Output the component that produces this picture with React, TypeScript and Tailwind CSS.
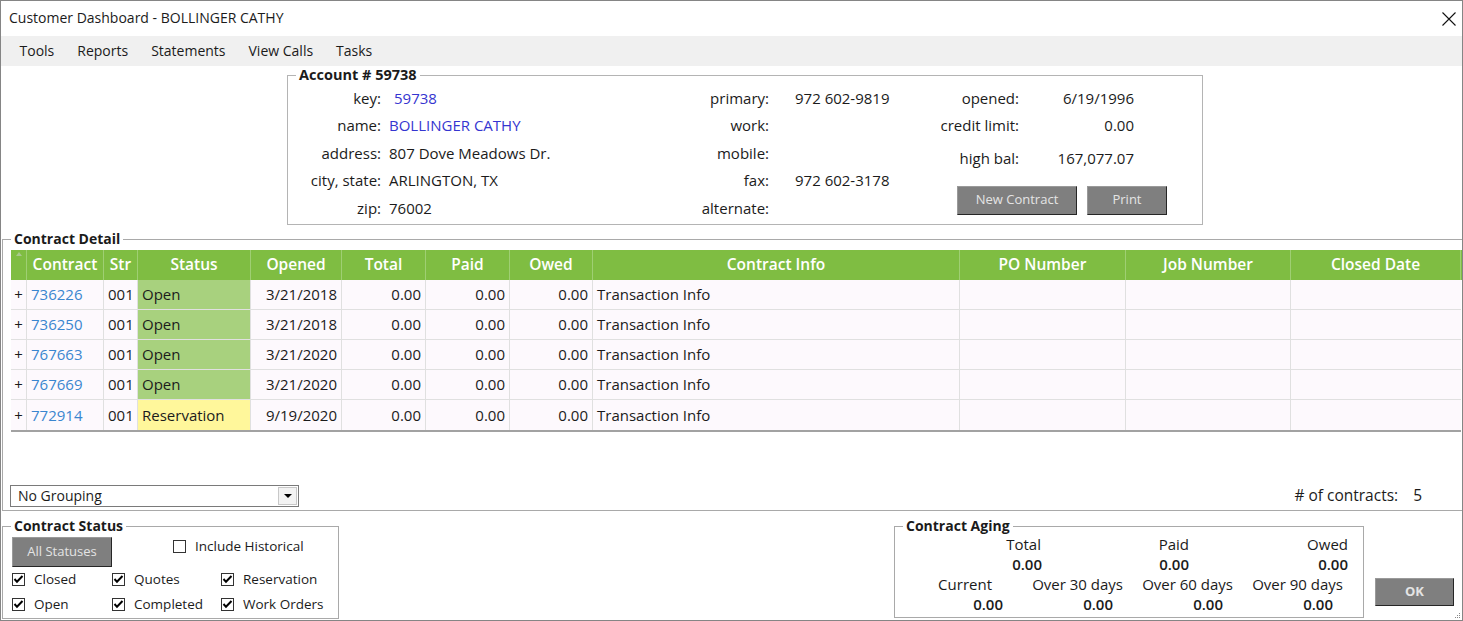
const font = { fontFamily: '"Open Sans", "Noto Sans", sans-serif' };

const cols =
  "grid grid-cols-[16px_77px_34px_113px_91px_84px_84px_83px_367px_166px_165px_170px]";

const contracts = [
  { no: "736226", status: "Open", opened: "3/21/2018" },
  { no: "736250", status: "Open", opened: "3/21/2018" },
  { no: "767663", status: "Open", opened: "3/21/2020" },
  { no: "767669", status: "Open", opened: "3/21/2020" },
  { no: "772914", status: "Reservation", opened: "9/19/2020" },
];

function WinButton({ label, className }: { label: string; className: string }) {
  return (
    <button
      className={`bg-[#7f7f7f] border border-[#9a9a9a] border-r-[#262626] border-b-[#262626] text-[#e4e4e4] text-[13px] flex items-center justify-center ${className}`}
    >
      {label}
    </button>
  );
}

function Check({ checked, label }: { checked: boolean; label: string }) {
  return (
    <div className="flex items-center gap-[9px] h-full">
      <span className="w-[13px] h-[13px] border border-[#333333] bg-white flex items-center justify-center">
        {checked && (
          <svg viewBox="0 0 11 11" className="w-[11px] h-[11px]">
            <path d="M1.5 5 L4 7.8 L9.5 2" stroke="#000" strokeWidth="2" fill="none" />
          </svg>
        )}
      </span>
      <span>{label}</span>
    </div>
  );
}

function Row({ label, value, w, gap, blue, valueClass }: { label: string; value?: string; w: string; gap: string; blue?: boolean; valueClass?: string }) {
  return (
    <div className={`flex items-center h-[27.5px] ${gap}`}>
      <span className={`${w} text-right shrink-0 whitespace-nowrap`}>{label}</span>
      <span className={`${blue ? "text-[#3535d0]" : ""} ${valueClass ?? ""} whitespace-nowrap`}>{value}</span>
    </div>
  );
}

export default function App() {
  return (
    <div
      style={font}
      className="w-[1463px] h-[621px] border border-[#858585] bg-white text-[14px] text-[#1b1b1b] overflow-hidden flex flex-col relative"
    >
      {/* title bar */}
      <div className="h-[35px] flex items-center justify-between pl-[8px] pr-[6px] shrink-0">
        <span className="-mt-[2px]">Customer Dashboard - BOLLINGER CATHY</span>
        <svg viewBox="0 0 14 14" className="w-[14px] h-[14px]">
          <path d="M0.5 0.5 L13.5 13.5 M13.5 0.5 L0.5 13.5" stroke="#111" strokeWidth="1.1" />
        </svg>
      </div>

      {/* menu */}
      <div className="h-[30px] bg-[#f0f0f0] flex items-center pl-[7px] pb-[2px] shrink-0">
        {["Tools", "Reports", "Statements", "View Calls", "Tasks"].map((m) => (
          <span key={m} className="px-[11.5px]">
            {m}
          </span>
        ))}
      </div>

      {/* account */}
      <fieldset className="ml-[286px] mt-[2px] w-[916px] h-[157px] border border-[#b4b4b4] shrink-0 text-[15px]">
        <legend className="ml-[8px] px-[3px] font-bold leading-[14px] text-[14.5px]">Account # 59738</legend>
        <div className="flex pt-[2px]">
          <div className="w-[400px]">
            <Row label="key:" value="59738" w="w-[93px]" gap="gap-[13px]" blue />
            <Row label="name:" value="BOLLINGER CATHY" w="w-[93px]" gap="gap-[8px]" blue />
            <Row label="address:" value="807 Dove Meadows Dr." w="w-[93px]" gap="gap-[8px]" />
            <Row label="city, state:" value="ARLINGTON, TX" w="w-[93px]" gap="gap-[8px]" />
            <Row label="zip:" value="76002" w="w-[93px]" gap="gap-[8px]" />
          </div>
          <div className="w-[220px]">
            <Row label="primary:" value="972 602-9819" w="w-[81px]" gap="gap-[26px]" />
            <Row label="work:" w="w-[81px]" gap="gap-[26px]" />
            <Row label="mobile:" w="w-[81px]" gap="gap-[26px]" />
            <Row label="fax:" value="972 602-3178" w="w-[81px]" gap="gap-[26px]" />
            <Row label="alternate:" w="w-[81px]" gap="gap-[26px]" />
          </div>
          <div className="w-[290px]">
            <Row label="opened:" value="6/19/1996" w="w-[111px]" gap="gap-0" valueClass="w-[115px] text-right" />
            <Row label="credit limit:" value="0.00" w="w-[111px]" gap="gap-0" valueClass="w-[115px] text-right" />
            <div className="mt-[5px]">
              <Row label="high bal:" value="167,077.07" w="w-[111px]" gap="gap-0" valueClass="w-[115px] text-right" />
            </div>
            <div className="flex gap-[10px] ml-[49px] mt-[14px]">
              <WinButton label="New Contract" className="w-[120px] h-[29px]" />
              <WinButton label="Print" className="w-[80px] h-[29px]" />
            </div>
          </div>
        </div>
      </fieldset>

      {/* contract detail */}
      <fieldset className="ml-[1px] mt-[7px] w-[1470px] h-[279px] border border-[#a9a9a9] shrink-0">
        <legend className="ml-[8px] px-[3px] font-bold leading-[14px]">Contract Detail</legend>
        <div className="pl-[8px] mt-[4px] text-[15px]">
          <div className={`${cols} h-[30px] bg-[#7fbd42] text-white font-semibold text-[15.5px]`}>
            <div className="border-r border-[#9fcf73] flex items-start justify-center pt-[2px]">
              <svg viewBox="0 0 6 4" className="w-[6px] h-[4px]">
                <path d="M0 4 L3 0 L6 4 Z" fill="#a8c98c" />
              </svg>
            </div>
            {["Contract", "Str", "Status", "Opened", "Total", "Paid", "Owed", "Contract Info", "PO Number", "Job Number", "Closed Date"].map((h) => (
              <div key={h} className="border-r border-[#9fcf73] flex items-center justify-center whitespace-nowrap">
                {h}
              </div>
            ))}
          </div>
          <div className="border-b-2 border-[#a2a2a2] w-[1450px]">
            {contracts.map((c) => (
              <div key={c.no} className={`${cols} h-[30px] bg-[#fdf9fd] border-b border-[#e0e0e0] last:border-b-0`}>
                <div className="flex items-center justify-center border-r border-[#e0e0e0]">+</div>
                <div className="flex items-center pl-[4px] border-r border-[#e0e0e0] text-[#3a86cf]">{c.no}</div>
                <div className="flex items-center pl-[4px] border-r border-[#e0e0e0]">001</div>
                <div
                  className={`flex items-center pl-[4px] border-r border-[#e0e0e0] ${c.status === "Open" ? "bg-[#a8d17e]" : "bg-[#fff79b]"}`}
                >
                  {c.status}
                </div>
                <div className="flex items-center justify-end pr-[4px] border-r border-[#e0e0e0]">{c.opened}</div>
                <div className="flex items-center justify-end pr-[4px] border-r border-[#e0e0e0]">0.00</div>
                <div className="flex items-center justify-end pr-[4px] border-r border-[#e0e0e0]">0.00</div>
                <div className="flex items-center justify-end pr-[4px] border-r border-[#e0e0e0]">0.00</div>
                <div className="flex items-center pl-[4px] border-r border-[#e0e0e0]">Transaction Info</div>
                <div className="border-r border-[#e0e0e0]" />
                <div className="border-r border-[#e0e0e0]" />
                <div />
              </div>
            ))}
          </div>
        </div>
        <div className="flex items-center justify-between mt-[52px] pl-[7px] w-[1458px] pr-[39px]">
          <div className="w-[289px] h-[22px] border border-[#7a7a7a] bg-white flex items-center justify-between pl-[7px] pr-[1px]">
            <span className="text-[14px]">No Grouping</span>
            <span className="w-[19px] h-[18px] border border-[#c8c8c8] bg-[#f3f3f3] flex items-center justify-center">
              <svg viewBox="0 0 8 4" className="w-[8px] h-[4px]">
                <path d="M0 0 L8 0 L4 4 Z" fill="#000" />
              </svg>
            </span>
          </div>
          <div className="flex items-center gap-[15px] text-[15.5px]">
            <span># of contracts:</span>
            <span>5</span>
          </div>
        </div>
      </fieldset>

      {/* bottom */}
      <div className="flex items-start mt-[8px] ml-[1px] shrink-0">
        <fieldset className="w-[337px] h-[100px] border border-[#a9a9a9] text-[13.5px]">
          <legend className="ml-[8px] px-[3px] font-bold leading-[14px] text-[14px]">Contract Status</legend>
          <div className="pl-[9px] mt-[4px]">
            <div className="flex items-start">
              <WinButton label="All Statuses" className="w-[100px] h-[30px]" />
              <div className="ml-[61px] mt-[2px] h-[15px]">
                <Check checked={false} label="Include Historical" />
              </div>
            </div>
            <div className="grid grid-cols-[100px_109px_auto] grid-rows-[25px_25px]">
              <Check checked label="Closed" />
              <Check checked label="Quotes" />
              <Check checked label="Reservation" />
              <Check checked label="Open" />
              <Check checked label="Completed" />
              <Check checked label="Work Orders" />
            </div>
          </div>
        </fieldset>

        <fieldset className="ml-[555px] w-[470px] h-[99px] border border-[#a9a9a9] text-[15px]">
          <legend className="ml-[8px] px-[3px] font-bold leading-[14px] text-[14px]">Contract Aging</legend>
          <div className="mt-[1px] leading-[20px]">
            <div className="grid grid-cols-[147px_147px_159px] text-right">
              <span className="pr-[1px]">Total</span>
              <span>Paid</span>
              <span>Owed</span>
              <span className="font-semibold">0.00</span>
              <span className="font-semibold">0.00</span>
              <span className="font-semibold">0.00</span>
            </div>
            <div className="grid grid-cols-[118px_110px_110px_110px] text-right">
              <span className="pr-[21px]">Current</span>
              <span>Over 30 days</span>
              <span>Over 60 days</span>
              <span>Over 90 days</span>
              <span className="pr-[10px] font-semibold">0.00</span>
              <span className="pr-[10px] font-semibold">0.00</span>
              <span className="pr-[10px] font-semibold">0.00</span>
              <span className="pr-[10px] font-semibold">0.00</span>
            </div>
          </div>
        </fieldset>

        <WinButton label="OK" className="ml-[11px] mt-[59px] w-[79px] h-[28px] font-bold" />
      </div>

      <svg viewBox="0 0 6 6" className="absolute right-[1px] bottom-[1px] w-[6px] h-[6px]">
        <rect x="4" y="0" width="1" height="1" fill="#888" />
        <rect x="2" y="2" width="1" height="1" fill="#888" />
        <rect x="4" y="2" width="1" height="1" fill="#888" />
        <rect x="0" y="4" width="1" height="1" fill="#888" />
        <rect x="2" y="4" width="1" height="1" fill="#888" />
        <rect x="4" y="4" width="1" height="1" fill="#888" />
      </svg>
    </div>
  );
}
